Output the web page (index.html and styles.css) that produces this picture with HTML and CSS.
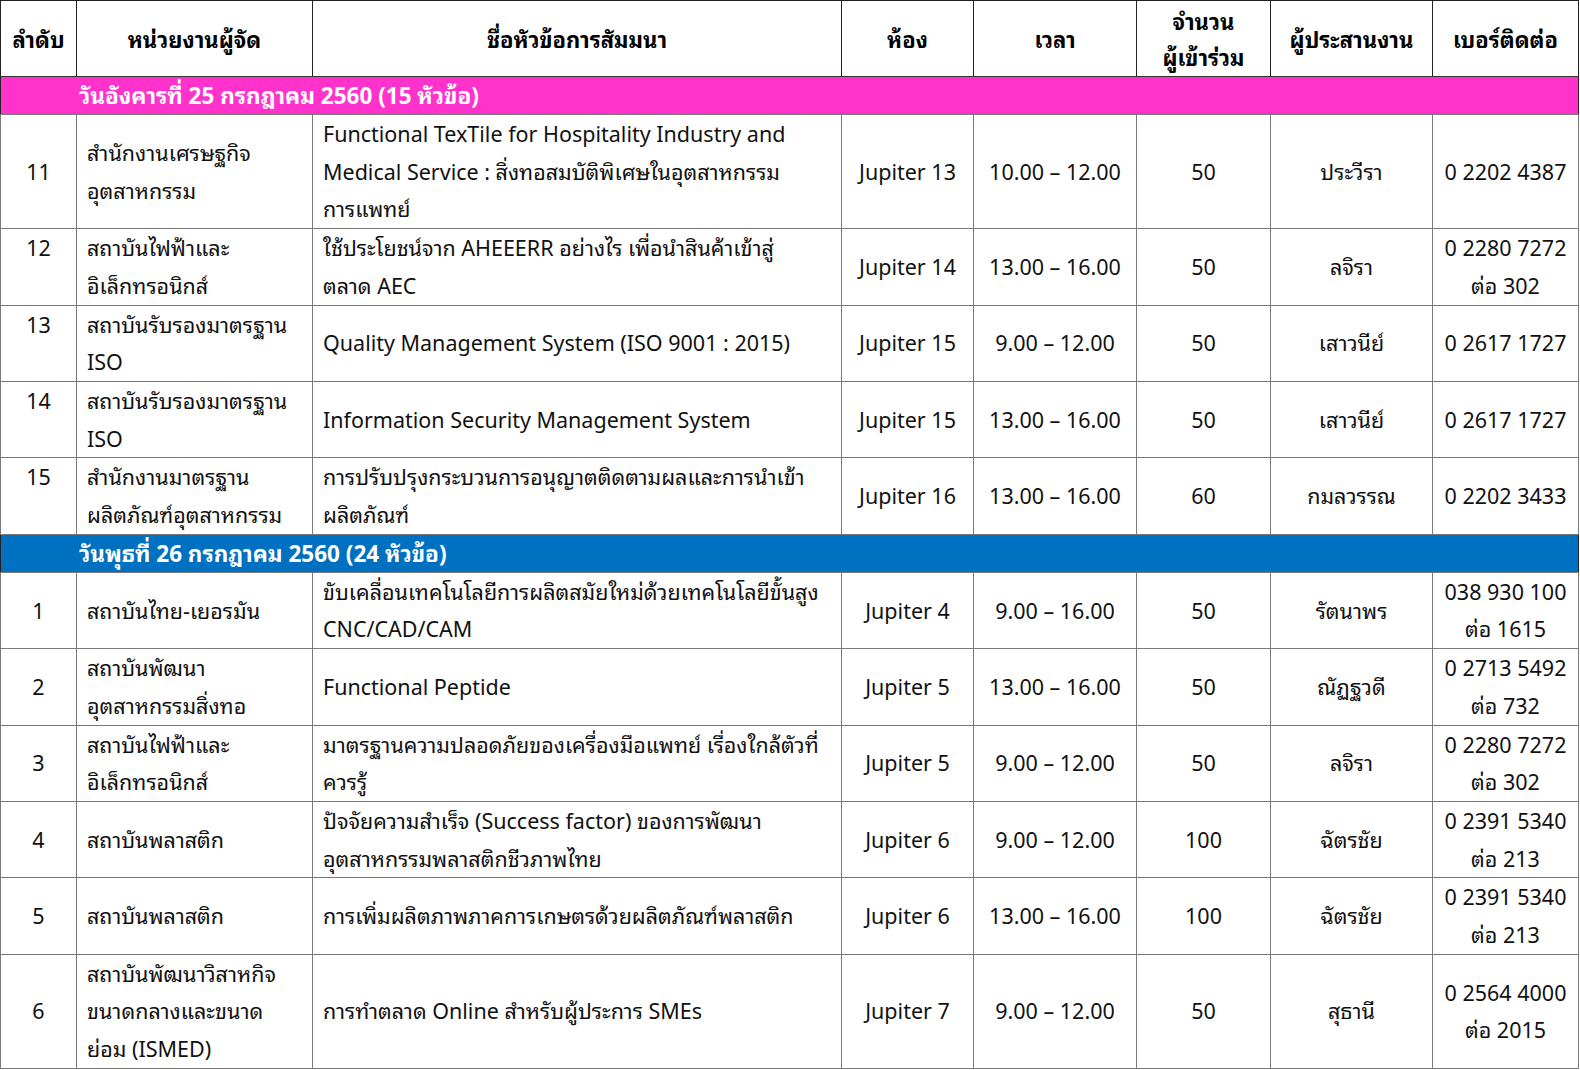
FILE: index.html
```html
<!DOCTYPE html>
<html lang="th">
<head>
<meta charset="utf-8">
<title>ตารางสัมมนา</title>
<link rel="stylesheet" href="styles.css">
</head>
<body>
<table class="sched">
<colgroup>
<col class="c1"><col class="c2"><col class="c3"><col class="c4"><col class="c5"><col class="c6"><col class="c7"><col class="c8">
</colgroup>
<thead>
<tr class="head">
<th>ลำดับ</th><th>หน่วยงานผู้จัด</th><th>ชื่อหัวข้อการสัมมนา</th><th>ห้อง</th><th>เวลา</th><th>จำนวน<br>ผู้เข้าร่วม</th><th>ผู้ประสานงาน</th><th>เบอร์ติดต่อ</th>
</tr>
</thead>
<tbody>
<tr class="day pink"><td colspan="8">วันอังคารที่ 25 กรกฎาคม 2560 (15 หัวข้อ)</td></tr>
<tr><td class="num">11</td><td class="org">สำนักงานเศรษฐกิจ<br>อุตสาหกรรม</td><td class="topic">Functional TexTile for Hospitality Industry and<br>Medical Service : สิ่งทอสมบัติพิเศษในอุตสาหกรรม<br>การแพทย์</td><td class="ctr">Jupiter 13</td><td class="ctr">10.00 – 12.00</td><td class="ctr">50</td><td class="ctr">ประวีรา</td><td class="ctr">0 2202 4387</td></tr>
<tr><td class="num top">12</td><td class="org">สถาบันไฟฟ้าและ<br>อิเล็กทรอนิกส์</td><td class="topic">ใช้ประโยชน์จาก AHEEERR อย่างไร เพื่อนำสินค้าเข้าสู่<br>ตลาด AEC</td><td class="ctr">Jupiter 14</td><td class="ctr">13.00 – 16.00</td><td class="ctr">50</td><td class="ctr">ลจิรา</td><td class="ctr">0 2280 7272<br>ต่อ 302</td></tr>
<tr><td class="num top">13</td><td class="org">สถาบันรับรองมาตรฐาน<br>ISO</td><td class="topic">Quality Management System (ISO 9001 : 2015)</td><td class="ctr">Jupiter 15</td><td class="ctr">9.00 – 12.00</td><td class="ctr">50</td><td class="ctr">เสาวนีย์</td><td class="ctr">0 2617 1727</td></tr>
<tr><td class="num top">14</td><td class="org">สถาบันรับรองมาตรฐาน<br>ISO</td><td class="topic">Information Security Management System</td><td class="ctr">Jupiter 15</td><td class="ctr">13.00 – 16.00</td><td class="ctr">50</td><td class="ctr">เสาวนีย์</td><td class="ctr">0 2617 1727</td></tr>
<tr><td class="num top">15</td><td class="org">สำนักงานมาตรฐาน<br>ผลิตภัณฑ์อุตสาหกรรม</td><td class="topic">การปรับปรุงกระบวนการอนุญาตติดตามผลและการนำเข้า<br>ผลิตภัณฑ์</td><td class="ctr">Jupiter 16</td><td class="ctr">13.00 – 16.00</td><td class="ctr">60</td><td class="ctr">กมลวรรณ</td><td class="ctr">0 2202 3433</td></tr>
<tr class="day blue"><td colspan="8">วันพุธที่ 26 กรกฎาคม 2560 (24 หัวข้อ)</td></tr>
<tr><td class="num">1</td><td class="org">สถาบันไทย-เยอรมัน</td><td class="topic">ขับเคลื่อนเทคโนโลยีการผลิตสมัยใหม่ด้วยเทคโนโลยีขั้นสูง<br>CNC/CAD/CAM</td><td class="ctr">Jupiter 4</td><td class="ctr">9.00 – 16.00</td><td class="ctr">50</td><td class="ctr">รัตนาพร</td><td class="ctr">038 930 100<br>ต่อ 1615</td></tr>
<tr><td class="num">2</td><td class="org">สถาบันพัฒนา<br>อุตสาหกรรมสิ่งทอ</td><td class="topic">Functional Peptide</td><td class="ctr">Jupiter 5</td><td class="ctr">13.00 – 16.00</td><td class="ctr">50</td><td class="ctr">ณัฏฐวดี</td><td class="ctr">0 2713 5492<br>ต่อ 732</td></tr>
<tr><td class="num">3</td><td class="org">สถาบันไฟฟ้าและ<br>อิเล็กทรอนิกส์</td><td class="topic">มาตรฐานความปลอดภัยของเครื่องมือแพทย์ เรื่องใกล้ตัวที่<br>ควรรู้</td><td class="ctr">Jupiter 5</td><td class="ctr">9.00 – 12.00</td><td class="ctr">50</td><td class="ctr">ลจิรา</td><td class="ctr">0 2280 7272<br>ต่อ 302</td></tr>
<tr><td class="num">4</td><td class="org">สถาบันพลาสติก</td><td class="topic">ปัจจัยความสำเร็จ (Success factor) ของการพัฒนา<br>อุตสาหกรรมพลาสติกชีวภาพไทย</td><td class="ctr">Jupiter 6</td><td class="ctr">9.00 – 12.00</td><td class="ctr">100</td><td class="ctr">ฉัตรชัย</td><td class="ctr">0 2391 5340<br>ต่อ 213</td></tr>
<tr><td class="num">5</td><td class="org">สถาบันพลาสติก</td><td class="topic">การเพิ่มผลิตภาพภาคการเกษตรด้วยผลิตภัณฑ์พลาสติก</td><td class="ctr">Jupiter 6</td><td class="ctr">13.00 – 16.00</td><td class="ctr">100</td><td class="ctr">ฉัตรชัย</td><td class="ctr">0 2391 5340<br>ต่อ 213</td></tr>
<tr><td class="num">6</td><td class="org">สถาบันพัฒนาวิสาหกิจ<br>ขนาดกลางและขนาด<br>ย่อม (ISMED)</td><td class="topic">การทำตลาด Online สำหรับผู้ประการ SMEs</td><td class="ctr">Jupiter 7</td><td class="ctr">9.00 – 12.00</td><td class="ctr">50</td><td class="ctr">สุธานี</td><td class="ctr">0 2564 4000<br>ต่อ 2015</td></tr>
</tbody>
</table>
</body>
</html>
```
FILE: styles.css
```css
html, body {
  margin: 0;
  padding: 0;
  background: #ffffff;
}
body {
  font-family: "Noto Sans", "Noto Sans Thai Looped", "Noto Sans Thai", "Open Sans", sans-serif;
  color: #111;
}
.sched {
  border-collapse: collapse;
  table-layout: fixed;
  width: 1578px;
  border: 1px solid #222;
  font-size: 21.5px;
}
.c1 { width: 76px; }
.c2 { width: 236px; }
.c3 { width: 529px; }
.c4 { width: 132px; }
.c5 { width: 163px; }
.c6 { width: 134px; }
.c7 { width: 162px; }
.c8 { width: 146px; }
.sched th, .sched td {
  border: 1px solid #7a7a7a;
  padding: 0 10px;
  vertical-align: middle;
  line-height: 37.7px;
}
.head th {
  height: 75px;
  line-height: 36px;
  font-size: 22px;
  font-weight: bold;
  text-align: center;
  color: #000;
  border-color: #222;
  border-bottom: 1px solid #333;
  padding: 0 4px;
}
.day td {
  color: #fff;
  font-weight: bold;
  font-size: 22.5px;
  padding: 0 3px 0 78px;
  height: 37px;
  line-height: 37px;
  text-align: left;
  border-left-color: #222;
  border-right-color: #222;
}
.pink td { background: #ff33cc; }
.blue td { background: #0070c0; }
.num {
  text-align: center;
}
.num.top {
  vertical-align: top;
}
.org, .topic {
  text-align: left;
}
.ctr {
  text-align: center;
  padding: 0 4px;
}
```
